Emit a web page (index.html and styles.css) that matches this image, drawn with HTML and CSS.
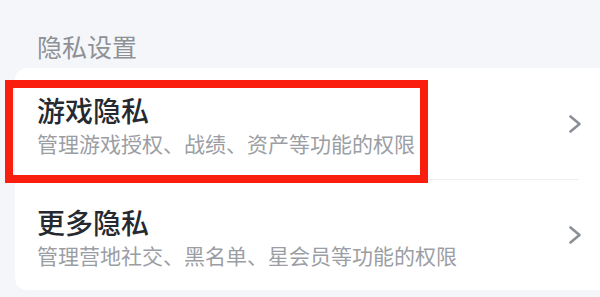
FILE: index.html
```html
<!DOCTYPE html>
<html lang="zh-CN">
<head>
<meta charset="utf-8">
<title>隐私设置</title>
<link rel="stylesheet" href="styles.css">
</head>
<body>
<div class="page">
  <div class="section-title">隐私设置</div>
  <div class="card">
    <div class="row row-first">
      <div class="text">
        <div class="title">游戏隐私</div>
        <div class="desc">管理游戏授权、战绩、资产等功能的权限</div>
      </div>
      <svg class="chevron" viewBox="0 0 14 20" width="14" height="20"><polyline points="2.5,2.5 11.5,10 2.5,17.5"/></svg>
    </div>
    <div class="row">
      <div class="text">
        <div class="title">更多隐私</div>
        <div class="desc">管理营地社交、黑名单、星会员等功能的权限</div>
      </div>
      <svg class="chevron" viewBox="0 0 14 20" width="14" height="20"><polyline points="2.5,2.5 11.5,10 2.5,17.5"/></svg>
    </div>
  </div>
  <div class="highlight"></div>
</div>
</body>
</html>
```

FILE: styles.css
```css
html, body {
  margin: 0;
  padding: 0;
}
body {
  background: #f5f6fa;
  font-family: "Noto Sans CJK SC", "Noto Sans", sans-serif;
  width: 600px;
  height: 297px;
  overflow: hidden;
}
.page {
  position: relative;
  width: 600px;
}
.section-title {
  padding: 29px 0 5px 37px;
  font-size: 25px;
  line-height: 34px;
  color: #8e9196;
}
.card {
  margin-left: 15px;
  margin-right: -30px;
  padding-right: 30px;
  background: #ffffff;
  border-radius: 12px 0 0 12px;
}
.row {
  display: flex;
  align-items: center;
  justify-content: space-between;
  height: 110px;
  margin: 0 22px 0 22px;
}
.row-first {
  height: 111px;
  border-bottom: 1px solid #ededed;
}
.text {
  display: flex;
  flex-direction: column;
  padding-top: 2px;
}
.title {
  font-size: 28px;
  line-height: 36px;
  font-weight: 500;
  color: #262a30;
}
.desc {
  margin-top: 1px;
  font-size: 21px;
  line-height: 28px;
  color: #9b9ea4;
}
.chevron {
  margin-right: -4px;
  flex: none;
}
.chevron polyline {
  fill: none;
  stroke: #8b9097;
  stroke-width: 2.6;
  stroke-linecap: round;
  stroke-linejoin: round;
}
.highlight {
  position: absolute;
  left: 5px;
  top: 80px;
  width: 423px;
  height: 103px;
  box-sizing: border-box;
  border: 8px solid #f91e0e;
}
```
